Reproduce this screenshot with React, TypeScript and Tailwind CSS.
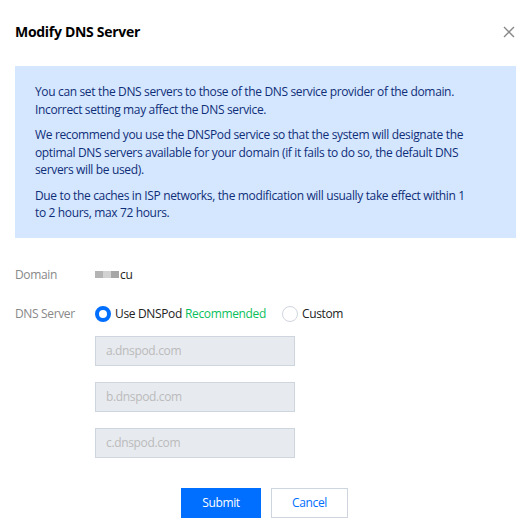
const servers = ['a.dnspod.com', 'b.dnspod.com', 'c.dnspod.com']

const notes = [
  'You can set the DNS servers to those of the DNS service provider of the domain. Incorrect setting may affect the DNS service.',
  'We recommend you use the DNSPod service so that the system will designate the optimal DNS servers available for your domain (if it fails to do so, the default DNS servers will be used).',
  'Due to the caches in ISP networks, the modification will usually take effect within 1 to 2 hours, max 72 hours.',
]

const App = () => {
  return (
    <div className="w-[531px] h-[531px] bg-white text-[12px] tracking-[-0.35px] text-black font-['Open_Sans',sans-serif]">
      {/* header */}
      <div className="flex items-center justify-between pl-[15px] pr-[16px] pt-[22px]">
        <h1 className="text-[14px] font-bold leading-[20px] tracking-[-0.3px] text-black">Modify DNS Server</h1>
        <svg width="12" height="12" viewBox="0 0 12 12" className="text-[#888]">
          <path d="M1 1L11 11M11 1L1 11" stroke="currentColor" strokeWidth="1.4" />
        </svg>
      </div>

      {/* notice */}
      <div className="mx-[15px] mt-[24px] bg-[#d5e7ff] pl-[20px] pr-[40px] pt-[17px] pb-[16px] text-[#0f2e78] leading-[17.5px]">
        {notes.map((n, i) => (
          <p key={i} className={i > 0 ? 'mt-[8px]' : ''}>
            {n}
          </p>
        ))}
      </div>

      {/* form */}
      <div className="px-[15px] mt-[22px]">
        <div className="flex items-center h-[30px]">
          <div className="w-[80px] text-[#888]">Domain</div>
          <div className="flex items-center">
            <span className="w-[8px] h-[7px] bg-[#b4b4b4]" />
            <span className="w-[8px] h-[7px] bg-[#d2d2d2]" />
            <span className="w-[8px] h-[7px] bg-[#a6a6a6]" />
            <span className="ml-[1px] text-[#222]">cu</span>
          </div>
        </div>

        <div className="flex mt-[9px]">
          <div className="w-[80px] h-[30px] flex items-center text-[#888]">DNS Server</div>
          <div className="flex flex-col">
            <div className="flex items-center h-[30px]">
              <label className="flex items-center">
                <span className="w-[16px] h-[16px] rounded-full border-[4px] border-[#006eff] bg-white" />
                <span className="ml-[4px] text-[#222]">Use DNSPod</span>
                <span className="ml-[3px] text-[#0abf5b]">Recommended</span>
              </label>
              <label className="flex items-center ml-[16px]">
                <span className="w-[16px] h-[16px] rounded-full border border-[#cfd5de] bg-white" />
                <span className="ml-[4px] text-[#222]">Custom</span>
              </label>
            </div>

            <div className="flex flex-col gap-[16px] mt-[7px]">
              {servers.map((s) => (
                <div
                  key={s}
                  className="w-[200px] h-[30px] border border-[#cfd5de] bg-[#e7eaef] px-[10px] flex items-center text-[#bbb]"
                >
                  {s}
                </div>
              ))}
            </div>
          </div>
        </div>
      </div>

      {/* actions */}
      <div className="flex justify-center gap-[10px] mt-[30px] pr-[2px]">
        <button className="w-[80px] h-[30px] bg-[#006eff] text-white">Submit</button>
        <button className="w-[77px] h-[30px] border border-[#cfd5de] bg-white text-[#006eff]">Cancel</button>
      </div>
    </div>
  )
}

export default App
